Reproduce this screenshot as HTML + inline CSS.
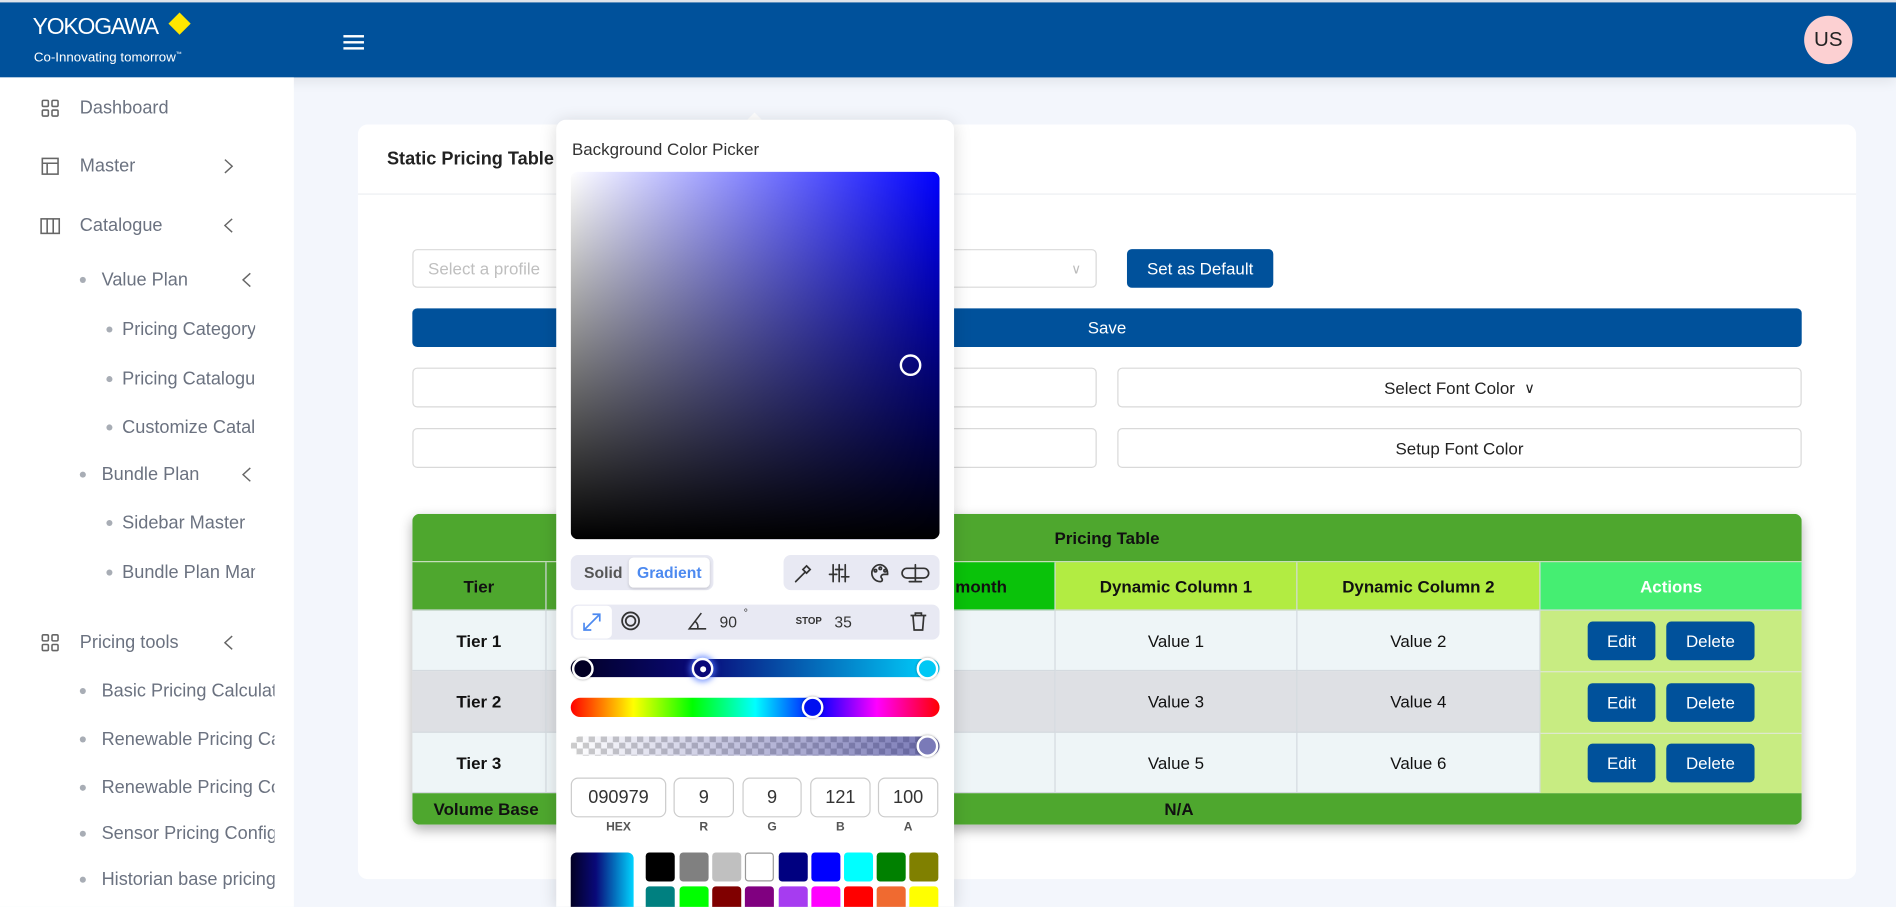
<!DOCTYPE html>
<html><head><meta charset="utf-8">
<style>
*{box-sizing:border-box;margin:0;padding:0}
html,body{width:1896px;height:907px;overflow:hidden;background:#f3f6fc;font-family:"Liberation Sans",Arial,sans-serif}
#s{width:1568px;height:750px;position:relative;transform:scale(1.2092);transform-origin:0 0;background:#f3f6fc;overflow:hidden}
.a{position:absolute}
.hdr{left:0;top:0;width:1568px;height:64px;background:#00519b;border-top:2px solid #dfe3ea;box-shadow:0 4px 10px rgba(0,0,0,.08)}
.side{left:0;top:64px;width:243px;height:686px;background:#fff}
.si{position:absolute;font-size:15px;color:#6b7280;white-space:nowrap;overflow:hidden;line-height:18px}
.dot{position:absolute;width:5px;height:5px;border-radius:50%;background:#a8adb5}
.chev{position:absolute}
.card{left:296px;top:103px;width:1239px;height:624px;background:#fff;border-radius:8px}
.btn{position:absolute;background:#00519b;color:#fff;border-radius:4px;font-size:14px;display:flex;align-items:center;justify-content:center}
.box{position:absolute;border:1px solid #d9d9d9;border-radius:4px;background:#fff;font-size:14px;color:#222;display:flex;align-items:center;justify-content:center}
.c{position:absolute;display:flex;align-items:center;justify-content:center;font-size:14px;color:#111;border-right:1px solid #d4dadf;border-bottom:1px solid #d4dadf}
.b{font-weight:bold}
.pop{left:460px;top:99px;width:329px;height:651px;background:#fff;border-radius:8px 8px 0 0;box-shadow:0 2px 14px rgba(0,0,0,.15)}
.inp{position:absolute;top:544px;height:33px;border:1px solid #ccc;border-radius:6px;font-size:15px;color:#333;display:flex;align-items:center;justify-content:center}
.lab{position:absolute;top:580px;font-size:10px;font-weight:bold;color:#555;text-align:center}
.sw{position:absolute;width:24px;height:24px;border-radius:3px}
.hd{position:absolute;border-radius:50%;border:2px solid #fff;box-shadow:0 0 2px rgba(0,0,0,.4)}
</style></head><body><div id="s">
<div class="a hdr">
 <div class="a" style="left:27px;top:10px;color:#fff;font-size:19px;letter-spacing:-1px">YOKOGAWA</div>
 <div class="a" style="left:142px;top:11px;width:13px;height:13px;background:#ffe600;transform:rotate(45deg)"></div>
 <div class="a" style="left:28px;top:40px;color:#fff;font-size:11px">Co-Innovating tomorrow<sup style="font-size:5px">™</sup></div>
 <div class="a" style="left:284px;top:27px;width:17px;height:2px;background:#fff;box-shadow:0 5px 0 #fff,0 10px 0 #fff"></div>
 <div class="a" style="left:1492px;top:11px;width:40px;height:40px;border-radius:50%;background:#fcd0d2;color:#222;font-size:17px;display:flex;align-items:center;justify-content:center">US</div>
</div>
<div class="a side">
 <svg class="a" style="left:34px;top:18px" width="15" height="15" viewBox="0 0 15 15" fill="none" stroke="#666" stroke-width="1.3"><rect x="1" y="1" width="5" height="5" rx="1"/><rect x="9" y="1" width="5" height="5" rx="1"/><rect x="1" y="9" width="5" height="5" rx="1"/><rect x="9" y="9" width="5" height="5" rx="1"/></svg>
 <div class="si" style="left:66px;top:17px">Dashboard</div>
 <svg class="a" style="left:34px;top:66px" width="15" height="15" viewBox="0 0 15 15" fill="none" stroke="#666" stroke-width="1.3"><rect x="1" y="1" width="13" height="13"/><path d="M1 5h13M5 5v9"/></svg>
 <div class="si" style="left:66px;top:65px">Master</div>
 <svg class="chev" style="left:185px;top:67px" width="8" height="13" viewBox="0 0 8 13" fill="none" stroke="#666" stroke-width="1.2"><path d="M1 1l6 5.5L1 12"/></svg>
 <svg class="a" style="left:33px;top:116px" width="17" height="14" viewBox="0 0 17 14" fill="none" stroke="#666" stroke-width="1.3"><rect x="1" y="1" width="15" height="12"/><path d="M6 1v12M11 1v12"/></svg>
 <div class="si" style="left:66px;top:114px">Catalogue</div>
 <svg class="chev" style="left:185px;top:116px" width="8" height="13" viewBox="0 0 8 13" fill="none" stroke="#666" stroke-width="1.2"><path d="M7 1L1 6.5 7 12"/></svg>
 <div class="dot" style="left:66px;top:165px"></div><div class="si" style="left:84px;top:159px;width:127px">Value Plan</div>
 <svg class="chev" style="left:200px;top:161px" width="8" height="13" viewBox="0 0 8 13" fill="none" stroke="#666" stroke-width="1.2"><path d="M7 1L1 6.5 7 12"/></svg>
 <div class="dot" style="left:88px;top:206px"></div><div class="si" style="left:101px;top:200px;width:110px">Pricing Category</div>
 <div class="dot" style="left:88px;top:247px"></div><div class="si" style="left:101px;top:241px;width:110px">Pricing Catalogue</div>
 <div class="dot" style="left:88px;top:287px"></div><div class="si" style="left:101px;top:281px;width:110px">Customize Catalogue</div>
 <div class="dot" style="left:66px;top:326px"></div><div class="si" style="left:84px;top:320px;width:127px">Bundle Plan</div>
 <svg class="chev" style="left:200px;top:322px" width="8" height="13" viewBox="0 0 8 13" fill="none" stroke="#666" stroke-width="1.2"><path d="M7 1L1 6.5 7 12"/></svg>
 <div class="dot" style="left:88px;top:366px"></div><div class="si" style="left:101px;top:360px;width:110px">Sidebar Master</div>
 <div class="dot" style="left:88px;top:407px"></div><div class="si" style="left:101px;top:401px;width:110px">Bundle Plan Management</div>
 <svg class="a" style="left:34px;top:460px" width="15" height="15" viewBox="0 0 15 15" fill="none" stroke="#666" stroke-width="1.3"><rect x="1" y="1" width="5" height="5" rx="1"/><rect x="9" y="1" width="5" height="5" rx="1"/><rect x="1" y="9" width="5" height="5" rx="1"/><rect x="9" y="9" width="5" height="5" rx="1"/></svg>
 <div class="si" style="left:66px;top:459px">Pricing tools</div>
 <svg class="chev" style="left:185px;top:461px" width="8" height="13" viewBox="0 0 8 13" fill="none" stroke="#666" stroke-width="1.2"><path d="M7 1L1 6.5 7 12"/></svg>
 <div class="dot" style="left:66px;top:505px"></div><div class="si" style="left:84px;top:499px;width:143px">Basic Pricing Calculator</div>
 <div class="dot" style="left:66px;top:545px"></div><div class="si" style="left:84px;top:539px;width:143px">Renewable Pricing Calculator</div>
 <div class="dot" style="left:66px;top:585px"></div><div class="si" style="left:84px;top:579px;width:143px">Renewable Pricing Config</div>
 <div class="dot" style="left:66px;top:623px"></div><div class="si" style="left:84px;top:617px;width:143px">Sensor Pricing Config</div>
 <div class="dot" style="left:66px;top:661px"></div><div class="si" style="left:84px;top:655px;width:143px">Historian base pricing</div>
</div>
<div class="a card">
 <div class="a" style="left:24px;top:20px;font-size:15px;font-weight:bold;color:#222">Static Pricing Table</div>
 <div class="a" style="left:0;top:57px;width:1239px;height:1px;background:#eceef1"></div>
</div>
<div class="box" style="left:341px;top:206px;width:566px;height:32px;justify-content:flex-start;padding-left:12px;color:#bfbfbf">Select a profile<span style="position:absolute;right:12px;color:#bbb;font-size:11px">&#x2228;</span></div>
<div class="btn" style="left:932px;top:206px;width:121px;height:32px">Set as Default</div>
<div class="btn" style="left:341px;top:255px;width:1149px;height:32px">Save</div>
<div class="box" style="left:341px;top:304px;width:566px;height:33px"></div>
<div class="box" style="left:924px;top:304px;width:566px;height:33px">Select Font Color&nbsp;&nbsp;<span style="font-size:12px">&#x2228;</span></div>
<div class="box" style="left:341px;top:354px;width:566px;height:33px"></div>
<div class="box" style="left:924px;top:354px;width:566px;height:33px">Setup Font Color</div>
<div class="a" style="left:341px;top:425px;width:1149px;height:257px;border-radius:6px;overflow:hidden;box-shadow:0 4px 10px rgba(0,0,0,.3);background:#eef5f7">
 <div class="c b" style="left:0;top:0;width:1149px;height:40px;background:#4ea72e;border-right:0;border-bottom:1px solid #cfe3c5">Pricing Table</div>
 <div class="c b" style="left:0;top:40px;width:111px;height:40px;background:#4ea72e">Tier</div>
 <div class="c b" style="left:111px;top:40px;width:210px;height:40px;background:#4ea72e"></div>
 <div class="c b" style="left:321px;top:40px;width:211px;height:40px;background:#0ac20a;justify-content:flex-start;padding-left:128px">month</div>
 <div class="c b" style="left:532px;top:40px;width:200px;height:40px;background:#b2ec42">Dynamic Column 1</div>
 <div class="c b" style="left:732px;top:40px;width:201px;height:40px;background:#b2ec42">Dynamic Column 2</div>
 <div class="c b" style="left:933px;top:40px;width:216px;height:40px;background:#45ee72;color:#fff;border-right:0">Actions</div>
 <div class="c b" style="left:0;top:80px;width:111px;height:50px">Tier 1</div><div class="c" style="left:111px;top:80px;width:421px;height:50px"></div>
 <div class="c" style="left:532px;top:80px;width:200px;height:50px">Value 1</div><div class="c" style="left:732px;top:80px;width:201px;height:50px">Value 2</div>
 <div class="c b" style="left:0;top:130px;width:111px;height:51px;background:#dee0e4">Tier 2</div><div class="c" style="left:111px;top:130px;width:421px;height:51px;background:#dee0e4"></div>
 <div class="c" style="left:532px;top:130px;width:200px;height:51px;background:#dee0e4">Value 3</div><div class="c" style="left:732px;top:130px;width:201px;height:51px;background:#dee0e4">Value 4</div>
 <div class="c b" style="left:0;top:181px;width:111px;height:50px">Tier 3</div><div class="c" style="left:111px;top:181px;width:421px;height:50px"></div>
 <div class="c" style="left:532px;top:181px;width:200px;height:50px">Value 5</div><div class="c" style="left:732px;top:181px;width:201px;height:50px">Value 6</div>
 <div class="a" style="left:933px;top:80px;width:216px;height:151px;background:#c8ec82"></div>
 <div class="a" style="left:933px;top:130px;width:216px;height:1px;background:#dfe8d0"></div>
 <div class="a" style="left:933px;top:181px;width:216px;height:1px;background:#dfe8d0"></div>
 <div class="btn" style="left:972px;top:89px;width:56px;height:32px">Edit</div><div class="btn" style="left:1037px;top:89px;width:73px;height:32px">Delete</div>
 <div class="btn" style="left:972px;top:140px;width:56px;height:32px">Edit</div><div class="btn" style="left:1037px;top:140px;width:73px;height:32px">Delete</div>
 <div class="btn" style="left:972px;top:190px;width:56px;height:32px">Edit</div><div class="btn" style="left:1037px;top:190px;width:73px;height:32px">Delete</div>
 <div class="a" style="left:0;top:231px;width:1149px;height:26px;background:#4ea72e"></div>
 <div class="c b" style="left:0;top:231px;width:122px;height:26px;border:0">Volume Base</div>
 <div class="c b" style="left:540px;top:231px;width:188px;height:26px;border:0">N/A</div>
</div>
<div class="a" style="left:618px;top:93px;width:0;height:0;border-left:6px solid transparent;border-right:6px solid transparent;border-bottom:6px solid #fff"></div>
<div class="a pop">
 <div class="a" style="left:13px;top:16px;font-size:14px;color:#333">Background Color Picker</div>
 <div class="a" style="left:12px;top:43px;width:305px;height:304px;border-radius:6px;background:linear-gradient(to top,#000,rgba(0,0,0,0)),linear-gradient(to right,#fff,#00f)"></div>
 <div class="a" style="left:284px;top:194px;width:18px;height:18px;border-radius:50%;border:2px solid #fff"></div>
 <div class="a" style="left:12px;top:360px;width:118px;height:29px;border-radius:6px;background:#e8e9f3"></div>
 <div class="a" style="left:23px;top:367px;font-size:13px;font-weight:bold;color:#555">Solid</div>
 <div class="a" style="left:60px;top:362px;width:67px;height:25px;border-radius:4px;background:#fff;box-shadow:0 1px 2px rgba(0,0,0,.15);font-size:13px;font-weight:bold;color:#4d8af0;display:flex;align-items:center;justify-content:center">Gradient</div>
 <div class="a" style="left:188px;top:360px;width:129px;height:29px;border-radius:6px;background:#e8e9f3"></div>
 <svg class="a" style="left:195px;top:366px" width="118" height="18" viewBox="0 0 118 18" fill="none" stroke="#333" stroke-width="1.4" stroke-linecap="round">
  <path d="M3 16l8-8M9 6l3 3M12 3l3 3-3 3-3-3z"/>
  <path d="M34 2v14M39 2v14M44 2v14M31 10h6M36 6h6M41 12h6"/>
  <path d="M73 2a7 7 0 1 0 0 14c2 0 2-2 1-3s0-3 2-3h3a4 4 0 0 0 0-1 7 7 0 0 0-6-7z"/><circle cx="69" cy="7" r="1"/><circle cx="73" cy="5" r="1"/><circle cx="77" cy="7" r="1"/>
  <path d="M102 2v14M97 16h10M95 5h14a2 2 0 0 1 0 8H95a2 2 0 0 1 0-8z"/>
 </svg>
 <div class="a" style="left:12px;top:401px;width:305px;height:29px;border-radius:6px;background:#e8e9f3"></div>
 <div class="a" style="left:14px;top:402px;width:32px;height:27px;border-radius:4px;background:#fff"></div>
 <svg class="a" style="left:21px;top:407px" width="17" height="17" viewBox="0 0 17 17" fill="none" stroke="#4d8af0" stroke-width="1.4"><path d="M2 15L15 2M9 2h6v6M2 9v6h6"/></svg>
 <svg class="a" style="left:53px;top:406px" width="17" height="17" viewBox="0 0 17 17" fill="none" stroke="#333" stroke-width="1.5"><circle cx="8.5" cy="8.5" r="7"/><circle cx="8.5" cy="8.5" r="4"/></svg>
 <svg class="a" style="left:108px;top:407px" width="17" height="15" viewBox="0 0 17 15" fill="none" stroke="#333" stroke-width="1.3"><path d="M12 1L2 14h14M7 8a6 6 0 0 1 2 6"/></svg>
 <div class="a" style="left:135px;top:408px;font-size:13px;color:#333">90</div><div class="a" style="left:155px;top:403px;font-size:9px;color:#333">°</div>
 <div class="a" style="left:198px;top:410px;font-size:8px;font-weight:bold;color:#333">STOP</div>
 <div class="a" style="left:230px;top:408px;font-size:13px;color:#333">35</div>
 <svg class="a" style="left:292px;top:406px" width="15" height="17" viewBox="0 0 15 17" fill="none" stroke="#333" stroke-width="1.4"><path d="M1 4h13M5 4V2h5v2M3 4l1 12h7l1-12"/></svg>
 <div class="a" style="left:12px;top:446px;width:305px;height:15px;border-radius:8px;background:linear-gradient(to right,#020024 0%,#090979 35%,#00d4ff 100%)"></div>
 <div class="hd" style="left:13px;top:445px;width:18px;height:18px;background:#020024"></div>
 <div class="hd" style="left:112px;top:445px;width:18px;height:18px;background:#090979;box-shadow:0 0 5px 2px rgba(80,120,255,.7)"></div>
 <div class="a" style="left:119px;top:452px;width:5px;height:5px;border-radius:50%;background:#fff"></div>
 <div class="hd" style="left:298px;top:445px;width:18px;height:18px;background:#00c8f5"></div>
 <div class="a" style="left:12px;top:478px;width:305px;height:16px;border-radius:8px;background:linear-gradient(to right,#f00,#ff0 17%,#0f0 33%,#0ff 50%,#00f 67%,#f0f 83%,#f00)"></div>
 <div class="hd" style="left:203px;top:477px;width:18px;height:18px;background:#0010f0"></div>
 <div class="a" style="left:12px;top:510px;width:305px;height:16px;border-radius:8px;background:linear-gradient(to right,rgba(9,9,121,0),rgba(9,9,121,.55)),repeating-conic-gradient(#ccc 0 25%,#fff 0 50%) 0 0/10px 10px"></div>
 <div class="hd" style="left:298px;top:509px;width:18px;height:18px;background:#7a7ab8"></div>
 <div class="inp" style="left:12px;width:79px">090979</div>
 <div class="inp" style="left:97px;width:50px">9</div>
 <div class="inp" style="left:154px;width:49px">9</div>
 <div class="inp" style="left:210px;width:50px">121</div>
 <div class="inp" style="left:266px;width:50px">100</div>
 <div class="lab" style="left:12px;width:79px">HEX</div><div class="lab" style="left:97px;width:50px">R</div><div class="lab" style="left:154px;width:49px">G</div><div class="lab" style="left:210px;width:50px">B</div><div class="lab" style="left:266px;width:50px">A</div>
 <div class="a" style="left:12px;top:606px;width:52px;height:60px;border-radius:5px;background:linear-gradient(to right,#020024,#090979 40%,#00d4ff)"></div>
 <div class="sw" style="left:74px;top:606px;background:#000"></div>
 <div class="sw" style="left:101.5px;top:606px;background:#808080"></div>
 <div class="sw" style="left:129px;top:606px;background:#c0c0c0"></div>
 <div class="sw" style="left:156px;top:606px;background:#fff;border:1px solid #999"></div>
 <div class="sw" style="left:183.5px;top:606px;background:#000080"></div>
 <div class="sw" style="left:211px;top:606px;background:#00f"></div>
 <div class="sw" style="left:238px;top:606px;background:#0ff"></div>
 <div class="sw" style="left:265px;top:606px;background:#008000"></div>
 <div class="sw" style="left:292px;top:606px;background:#808000"></div>
 <div class="sw" style="left:74px;top:634px;background:#008080"></div>
 <div class="sw" style="left:101.5px;top:634px;background:#0f0"></div>
 <div class="sw" style="left:129px;top:634px;background:#800000"></div>
 <div class="sw" style="left:156px;top:634px;background:#800080"></div>
 <div class="sw" style="left:183.5px;top:634px;background:#a63cf0"></div>
 <div class="sw" style="left:211px;top:634px;background:#f0f"></div>
 <div class="sw" style="left:238px;top:634px;background:#f00"></div>
 <div class="sw" style="left:265px;top:634px;background:#f06a30"></div>
 <div class="sw" style="left:292px;top:634px;background:#ff0"></div>
</div>
</div></body></html>
